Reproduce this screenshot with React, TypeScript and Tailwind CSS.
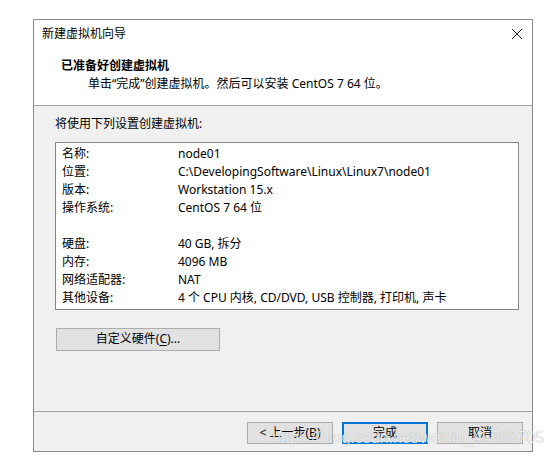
import React from 'react';

const font = { fontFamily: '"Noto Sans", "Noto Sans CJK SC", sans-serif' };

interface Row {
  label: string;
  value: string;
}

const rows: (Row | null)[] = [
  { label: '名称:', value: 'node01' },
  { label: '位置:', value: 'C:\\DevelopingSoftware\\Linux\\Linux7\\node01' },
  { label: '版本:', value: 'Workstation 15.x' },
  { label: '操作系统:', value: 'CentOS 7 64 位' },
  null,
  { label: '硬盘:', value: '40 GB, 拆分' },
  { label: '内存:', value: '4096 MB' },
  { label: '网络适配器:', value: 'NAT' },
  { label: '其他设备:', value: '4 个 CPU 内核, CD/DVD, USB 控制器, 打印机, 声卡' },
];

const WinButton: React.FC<{ primary?: boolean; children: React.ReactNode }> = ({ primary, children }) => (
  <button
    className={
      primary
        ? 'h-[22px] w-[86px] border-2 border-[#0078d7] bg-[#e1e1e1] text-[12px] leading-none text-black'
        : 'h-[22px] w-[86px] border border-[#adadad] bg-[#e1e1e1] text-[12px] leading-none text-black'
    }
  >
    {children}
  </button>
);

const App: React.FC = () => {
  return (
    <div className="relative h-[459px] w-[554px] bg-white text-black" style={font}>
      <div className="ml-[33px] pt-[19px]">
        <div className="flex h-[433px] w-[500px] flex-col border border-[#8a8a8a] bg-white">
          {/* title bar */}
          <div className="flex h-[28px] items-center justify-between pl-[8px] pr-[8px]">
            <span className="text-[12px]">新建虚拟机向导</span>
            <svg width="12" height="12" viewBox="0 0 12 12" className="mr-[1px]">
              <path d="M1 1 L11 11 M11 1 L1 11" stroke="#222" strokeWidth="1" />
            </svg>
          </div>

          {/* header */}
          <div className="h-[58px] border-b border-[#a0a0a0] pl-[27px] pt-[9px]">
            <div className="text-[12px] font-bold leading-[17px]">已准备好创建虚拟机</div>
            <div className="pl-[27px] text-[12px] leading-[19px]">单击“完成”创建虚拟机。然后可以安装 CentOS 7 64 位。</div>
          </div>

          {/* body */}
          <div className="flex flex-1 flex-col bg-[#f0f0f0] pl-[21px] pt-[9px]">
            <div className="text-[12px] leading-[17px]">将使用下列设置创建虚拟机:</div>
            <div className="mt-[10px] h-[168px] w-[464px] border border-[#828790] bg-white pl-[6px] pt-[2px]">
              {rows.map((r, i) =>
                r ? (
                  <div key={i} className="flex h-[18px] items-center text-[12px]">
                    <span className="w-[116px]">{r.label}</span>
                    <span>{r.value}</span>
                  </div>
                ) : (
                  <div key={i} className="h-[18px]" />
                )
              )}
            </div>
            <div className="mt-[15px] pl-[1px]">
              <button className="h-[23px] w-[164px] border border-[#adadad] bg-[#e1e1e1] text-[12px] leading-none">
                自定义硬件(<span className="underline underline-offset-2">C</span>)...
              </button>
            </div>
          </div>

          {/* footer */}
          <div className="flex h-[40px] items-start justify-end gap-[9px] border-t border-[#a0a0a0] bg-[#f0f0f0] pr-[9px] pt-[10px]">
            <WinButton>
              &lt; 上一步(<span className="underline underline-offset-2">B</span>)
            </WinButton>
            <WinButton primary>完成</WinButton>
            <WinButton>取消</WinButton>
          </div>
        </div>
      </div>

      {/* watermark */}
      <div
        className="pointer-events-none absolute left-[272px] top-[426px] text-[16px] text-white/80 [text-shadow:0_0_1px_rgba(0,0,0,0.35)]"
        style={{ fontFamily: '"Liberation Sans", Arial, sans-serif' }}
      >
        https://blog.csdn.net/weixin_45563705
      </div>
    </div>
  );
};

export default App;
